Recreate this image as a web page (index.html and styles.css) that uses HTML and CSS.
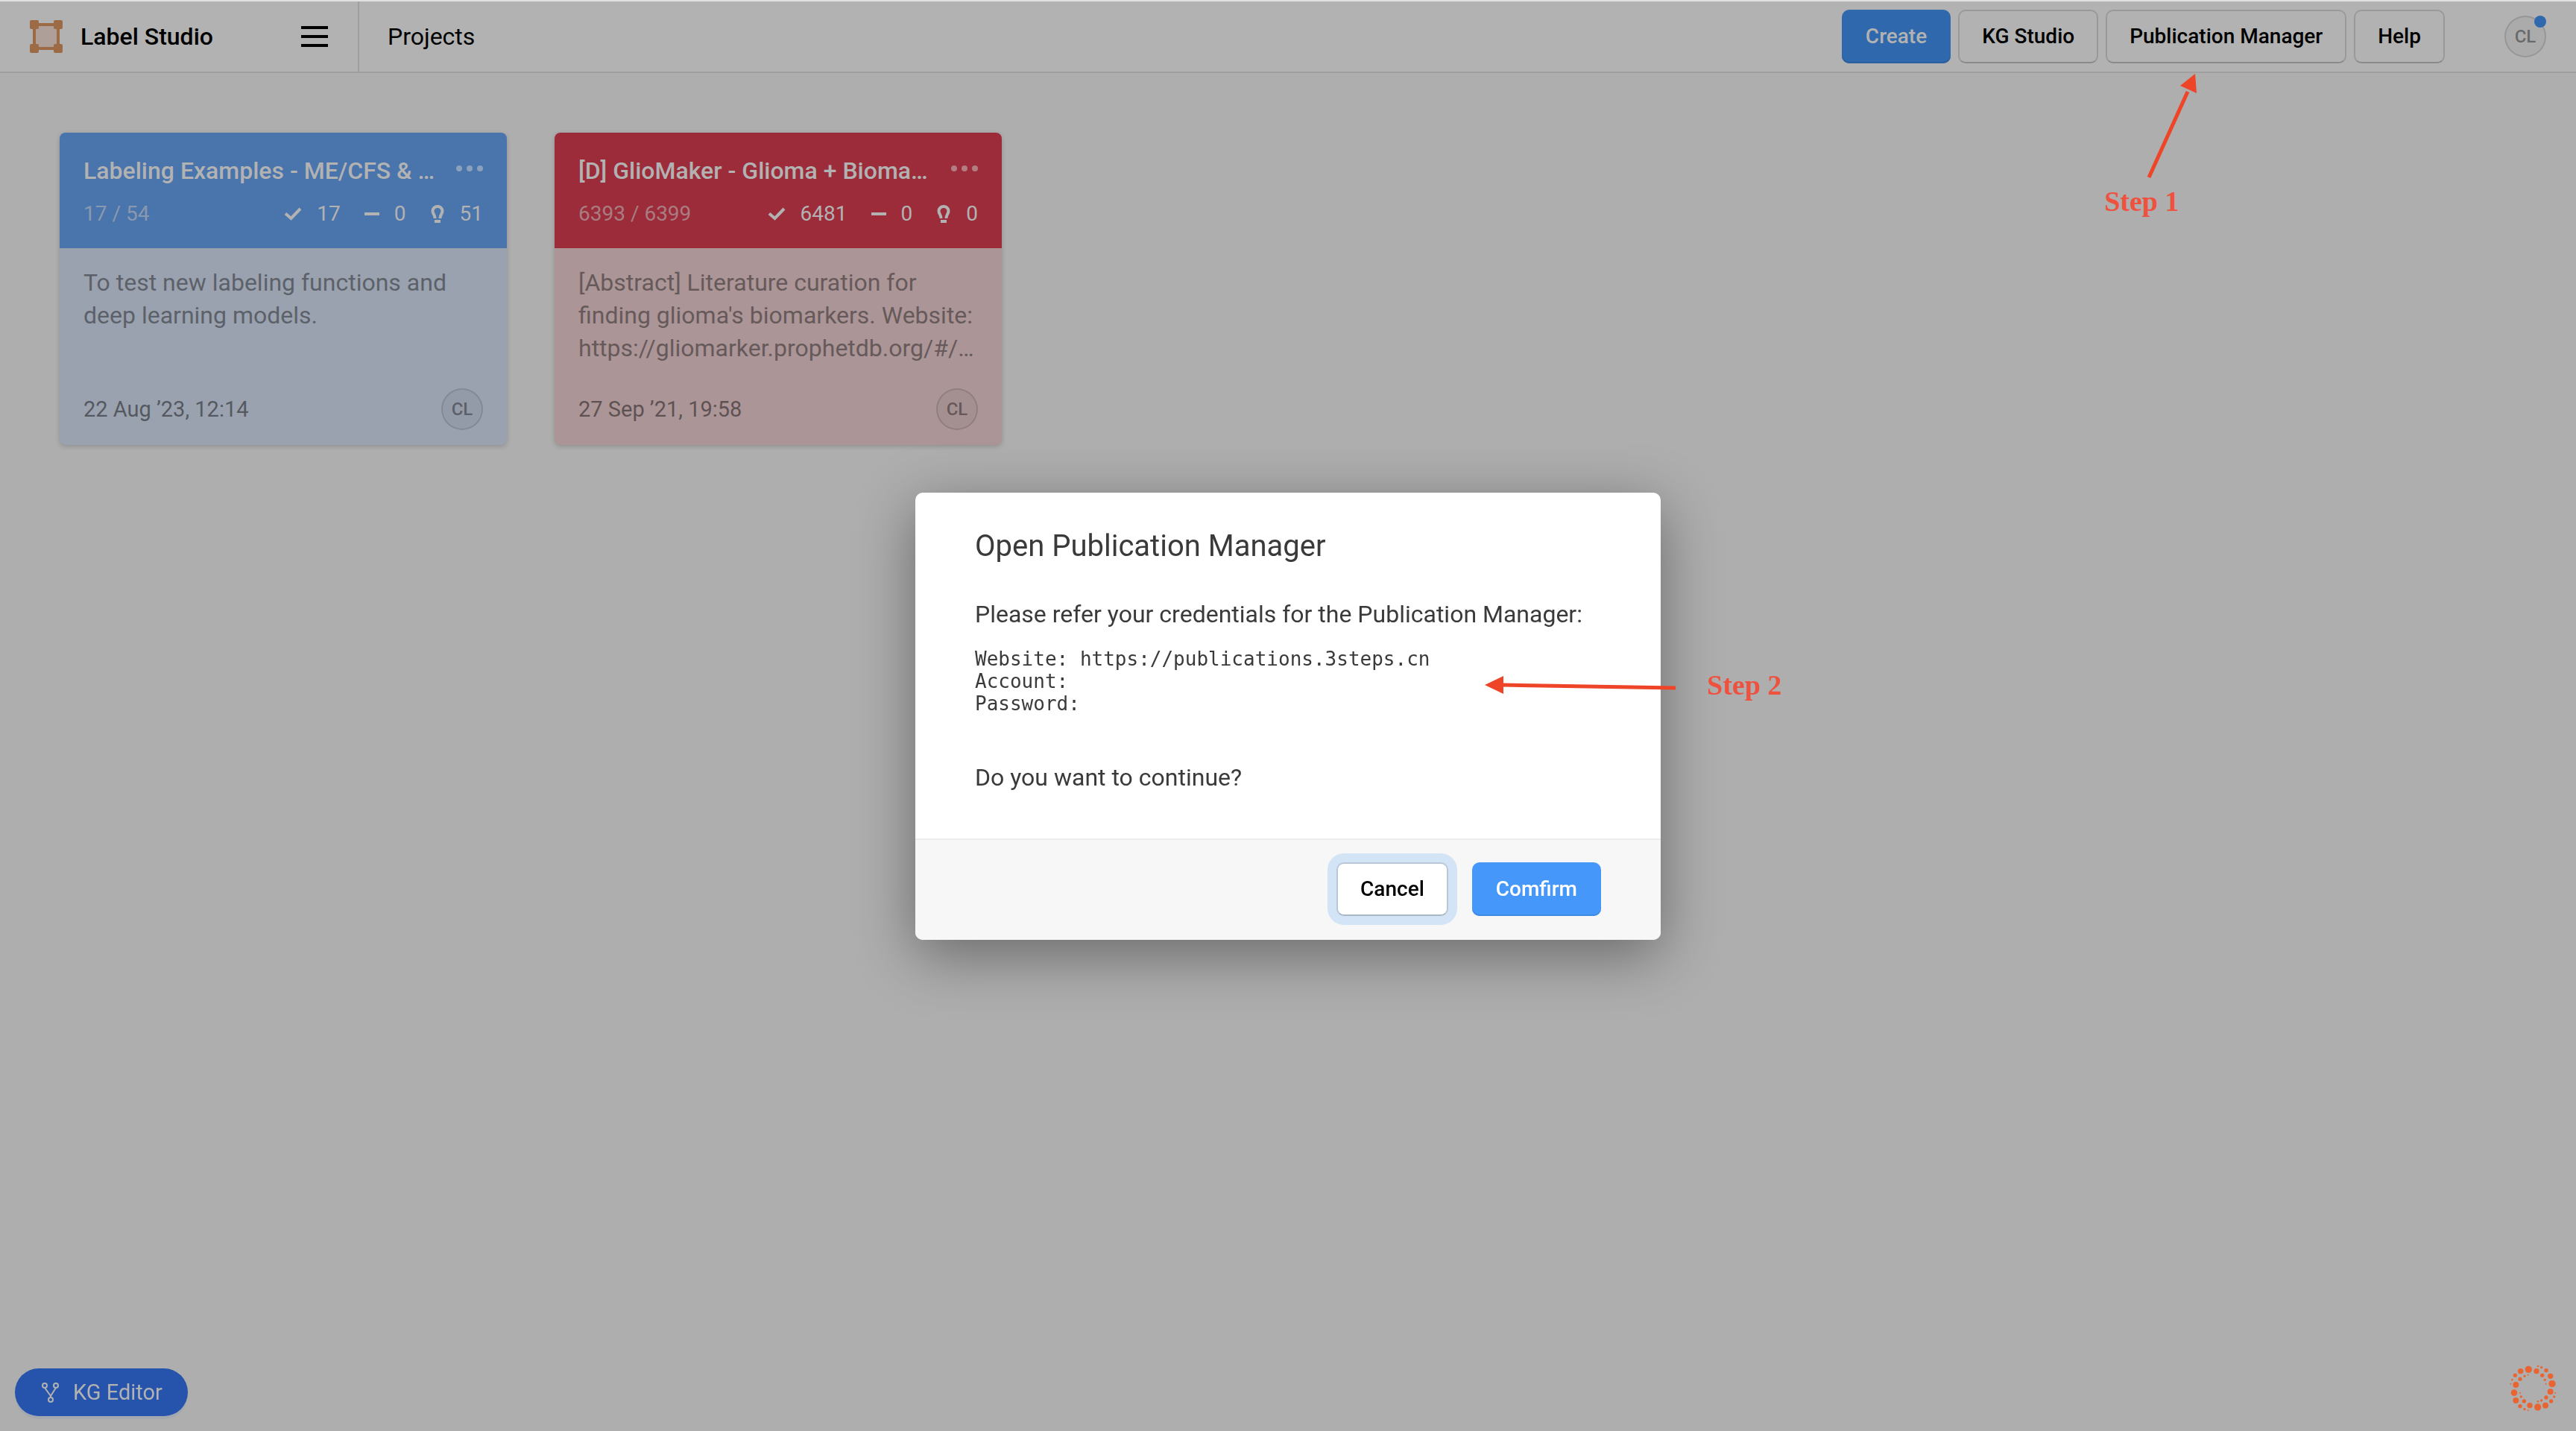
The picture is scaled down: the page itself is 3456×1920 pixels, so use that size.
FILE: index.html
```html
<!DOCTYPE html>
<html lang="en">
<head>
<meta charset="utf-8">
<title>Label Studio - Projects</title>
<link rel="stylesheet" href="styles.css">
</head>
<body>
<header class="topbar">
  <div class="brand">
    <a class="logo" href="#">
      <svg width="44" height="44" viewBox="0 0 44 44" aria-hidden="true">
        <rect x="6" y="6" width="32" height="32" fill="#aea099" stroke="#9c6a44" stroke-width="4"/>
        <g fill="#9c6a44"><rect width="12" height="12" rx="2"/><rect x="32" width="12" height="12" rx="2"/><rect y="32" width="12" height="12" rx="2"/><rect x="32" y="32" width="12" height="12" rx="2"/></g>
      </svg>
      <span>Label Studio</span>
    </a>
    <button class="menu-toggle" type="button" aria-label="Menu"><i></i><i></i><i></i></button>
  </div>
  <h1 class="crumb">Projects</h1>
  <div class="actions">
    <button class="btn btn-dim-primary" type="button">Create</button>
    <button class="btn btn-dim" type="button">KG Studio</button>
    <div class="anchor">
      <button class="btn btn-dim" type="button">Publication Manager</button>
      <div class="step step-one">
        <svg width="70" height="144" viewBox="0 0 70 144" aria-hidden="true"><path d="M6 141L58 26" stroke="#ee4427" stroke-width="5"/><path d="M68 2L48 18L70 28Z" fill="#ee4427"/></svg>
        <span>Step 1</span>
      </div>
    </div>
    <button class="btn btn-dim" type="button">Help</button>
  </div>
  <div class="avatar user">CL<i class="badge"></i></div>
</header>

<main class="projects">
  <article class="card card-blue">
    <div class="card-head">
      <div class="card-title"><h2>Labeling Examples - ME/CFS &amp; …</h2>
        <button class="more" type="button" aria-label="Project options"><i></i><i></i><i></i></button></div>
      <div class="card-stats">
        <span class="progress">17 / 54</span>
        <span class="stat"><svg width="24" height="20" viewBox="0 0 24 20"><path d="M2 9.500L9.500 16L22 3" fill="none" stroke="currentColor" stroke-width="4"/></svg>17</span>
        <span class="stat"><svg width="20" height="24" viewBox="0 0 20 24"><path d="M0 12H20" stroke="currentColor" stroke-width="4"/></svg>0</span>
        <span class="stat"><svg width="20" height="24" viewBox="0 0 20 24"><path d="M6.500 18C6.500 13 3.500 12 3.500 8A6.500 6 0 0 1 16.500 8C16.500 12 13.500 13 13.500 18" fill="none" stroke="currentColor" stroke-width="4"/><path d="M6 22H14" stroke="currentColor" stroke-width="4"/></svg>51</span>
      </div>
    </div>
    <p class="card-desc">To test new labeling functions and deep learning models.</p>
    <div class="card-foot"><time>22 Aug ’23, 12:14</time><div class="avatar">CL</div></div>
  </article>
  <article class="card card-red">
    <div class="card-head">
      <div class="card-title"><h2>[D] GlioMaker - Glioma + Bioma…</h2>
        <button class="more" type="button" aria-label="Project options"><i></i><i></i><i></i></button></div>
      <div class="card-stats">
        <span class="progress">6393 / 6399</span>
        <span class="stat"><svg width="24" height="20" viewBox="0 0 24 20"><path d="M2 9.500L9.500 16L22 3" fill="none" stroke="currentColor" stroke-width="4"/></svg>6481</span>
        <span class="stat"><svg width="20" height="24" viewBox="0 0 20 24"><path d="M0 12H20" stroke="currentColor" stroke-width="4"/></svg>0</span>
        <span class="stat"><svg width="20" height="24" viewBox="0 0 20 24"><path d="M6.500 18C6.500 13 3.500 12 3.500 8A6.500 6 0 0 1 16.500 8C16.500 12 13.500 13 13.500 18" fill="none" stroke="currentColor" stroke-width="4"/><path d="M6 22H14" stroke="currentColor" stroke-width="4"/></svg>0</span>
      </div>
    </div>
    <p class="card-desc">[Abstract] Literature curation for finding glioma's biomarkers. Website: https://gliomarker.prophetdb.org/#/…</p>
    <div class="card-foot"><time>27 Sep ’21, 19:58</time><div class="avatar">CL</div></div>
  </article>
</main>

<button class="editor" type="button">
  <svg width="24" height="28" viewBox="0 0 24 28" fill="none" stroke="currentColor" stroke-width="2" aria-hidden="true"><circle cx="4" cy="5" r="3"/><circle cx="19" cy="5" r="3"/><circle cx="12" cy="24" r="3"/><path d="M4 8L12 19L19 8M12 18V21"/></svg>
  KG Editor
</button>

<svg class="spinner" width="64" height="64" viewBox="0 0 192 192" fill="#ea6432" aria-hidden="true">
  <circle cx="79" cy="22" r="14"/><circle cx="47" cy="29" r="11"/><circle cx="111" cy="29" r="11"/><circle cx="117" cy="9" r="4"/><circle cx="131" cy="14" r="5"/><circle cx="150" cy="26" r="8"/><circle cx="134" cy="46" r="8"/><circle cx="167" cy="49" r="11"/><circle cx="145" cy="64" r="5"/><circle cx="149" cy="80" r="3"/><circle cx="174" cy="80" r="14"/><circle cx="167" cy="112" r="12"/><circle cx="187" cy="117" r="3"/><circle cx="182" cy="132" r="5"/><circle cx="150" cy="135" r="8"/><circle cx="170" cy="150" r="8"/><circle cx="131" cy="147" r="5"/><circle cx="117" cy="151" r="4"/><circle cx="147" cy="167" r="12"/><circle cx="116" cy="174" r="14"/><circle cx="84" cy="167" r="11"/><circle cx="77" cy="187" r="3"/><circle cx="63" cy="182" r="5"/><circle cx="61" cy="150" r="8"/><circle cx="45" cy="170" r="8"/><circle cx="28" cy="147" r="12"/><circle cx="49" cy="132" r="5"/><circle cx="45" cy="117" r="3"/><circle cx="21" cy="116" r="13"/><circle cx="28" cy="84" r="12"/><circle cx="7" cy="80" r="3"/><circle cx="13" cy="64" r="4"/><circle cx="25" cy="46" r="8"/><circle cx="45" cy="61" r="8"/><circle cx="63" cy="49" r="5"/><circle cx="77" cy="44" r="3"/>
</svg>

<div class="overlay">
  <section class="modal" role="dialog" aria-labelledby="modal-title">
    <div class="modal-body">
      <h2 id="modal-title">Open Publication Manager</h2>
      <p>Please refer your credentials for the Publication Manager:</p>
      <pre>Website: https://publications.3steps.cn
Account:
Password:</pre>
      <p>Do you want to continue?</p>
    </div>
    <footer class="modal-foot">
      <button class="btn btn-light" type="button">Cancel</button>
      <button class="btn btn-primary" type="button">Comfirm</button>
    </footer>
    <div class="step step-two">
      <svg width="258" height="28" viewBox="0 0 258 28" aria-hidden="true"><path d="M24 14L256 18" stroke="#ee4427" stroke-width="5"/><path d="M0 14L25 2V26Z" fill="#ee4427"/></svg>
      <span>Step 2</span>
    </div>
  </section>
</div>
</body>
</html>
```
FILE: styles.css
```css
* { box-sizing: border-box; }

body {
  margin: 0;
  min-height: 100vh;
  background: #aeaeae;
  color: #000;
  font: 400 32px/44px Roboto, "Liberation Sans", sans-serif;
}

h1, h2, p, pre { margin: 0; font-weight: 400; font-size: 32px; }
button { font: inherit; color: inherit; padding: 0; border: 0; background: none; }
svg { display: block; flex: none; }

/* Top bar */
.topbar {
  display: flex;
  align-items: center;
  height: 98px;
  padding-right: 40px;
  background: #b2b2b2;
  border-top: 2px solid #e0e0e0;
  border-bottom: 2px solid #9f9f9f;
}
.brand {
  display: flex;
  align-items: center;
  justify-content: space-between;
  align-self: stretch;
  width: 482px;
  padding: 0 40px;
  border-right: 2px solid #9f9f9f;
}
.logo { display: flex; align-items: center; gap: 24px; color: inherit; font-weight: 500; text-decoration: none; }
.menu-toggle { display: grid; gap: 8px; width: 36px; }
.menu-toggle i { height: 4px; background: #000; }
.crumb { padding-left: 38px; }
.actions { display: flex; gap: 10px; margin-left: auto; }
.anchor { position: relative; }

.btn {
  display: block;
  height: 72px;
  padding: 0 32px;
  border-radius: 10px;
  font-size: 28px;
  font-weight: 500;
  white-space: nowrap;
}
.btn-dim { padding: 0 30px; border: 2px solid #999; border-bottom-color: #8a8a8a; }
.btn-dim-primary { background: #2f68ac; color: #b2b2b2; box-shadow: inset 0 -2px #2b5f9d; }
.btn-light { padding: 0 30px; background: #fff; border: 2px solid #b9c8d8; border-bottom-color: #a9b7c5; box-shadow: 0 0 0 12px #d3e4f6; }
.btn-primary { background: #4598f9; color: #fff; box-shadow: inset 0 -2px #3f8be3; }

.avatar {
  display: grid;
  place-items: center;
  width: 56px;
  height: 56px;
  border: 2px solid rgb(0 0 0 / 12%);
  border-radius: 50%;
  background: rgb(0 0 0 / 4%);
  color: rgb(0 0 0 / 40%);
  font-size: 24px;
  font-weight: 500;
}
.user { position: relative; margin-left: 80px; }
.badge { position: absolute; top: -2px; right: -2px; width: 16px; height: 16px; border-radius: 50%; background: #2f68ac; }

/* Project cards */
.projects {
  display: grid;
  grid-template-columns: repeat(auto-fill, 600px);
  gap: 64px;
  padding: 80px;
}
.card {
  display: flex;
  flex-direction: column;
  height: 419px;
  border-radius: 8px;
  overflow: hidden;
  box-shadow: 0 2px 6px rgb(0 0 0 / 18%);
}
.card-head { height: 155px; padding: 29px 32px; color: #b2b2b2; }
.card-title { display: flex; justify-content: space-between; align-items: center; gap: 12px; }
.card-title h2 { white-space: nowrap; font-weight: 500; }
.more { display: flex; gap: 6px; padding-bottom: 6px; opacity: .5; }
.more i { width: 8px; height: 8px; border-radius: 50%; background: #ccc; }
.card-stats { display: flex; gap: 32px; padding-top: 14px; font-size: 28px; }
.progress { margin-right: auto; opacity: .6; }
.stat { display: flex; align-items: center; gap: 20px; }
.card-desc { padding: 24px 32px 0; opacity: .4; }
.card-foot { display: flex; justify-content: space-between; align-items: center; margin-top: auto; padding: 0 32px 20px; font-size: 29px; }
.card-foot time { opacity: .45; }
.card-blue { background: #9ba2af; }
.card-blue .card-head { background: #4974ac; }
.card-red { background: #ab9597; }
.card-red .card-head { background: #9c2c3a; }

/* Floating items */
.editor {
  position: fixed;
  left: 20px;
  bottom: 20px;
  display: flex;
  align-items: center;
  gap: 18px;
  height: 64px;
  padding: 0 34px 0 36px;
  border-radius: 32px;
  background: #2653ab;
  color: #b2b2b2;
  font-size: 29px;
  box-shadow: 0 4px 0 #a2a7b0;
}
.spinner { position: fixed; right: 26px; bottom: 26px; }

/* Dialog */
.overlay { position: fixed; inset: 0; display: grid; place-items: center; padding-top: 2px; }
.modal {
  position: relative;
  width: 1000px;
  border-radius: 10px;
  background: #fff;
  color: #3a3a3a;
  box-shadow: 0 20px 80px rgb(0 0 0 / 40%);
}
.modal-body { padding: 48px 80px 60px; }
.modal h2 { padding-bottom: 45px; font-size: 40px; line-height: 48px; }
.modal pre { padding: 23px 0 62px; font: 26px/30px "DejaVu Sans Mono", monospace; }
.modal-foot {
  display: flex;
  justify-content: flex-end;
  gap: 32px;
  padding: 30px 80px 32px;
  border-top: 2px solid #ececec;
  border-radius: 0 0 10px 10px;
  background: #f7f7f7;
}
.btn-light { color: #000; }

/* Walkthrough annotations */
.step { position: absolute; color: #ef513f; font: 700 38px/44px "Liberation Serif", serif; white-space: nowrap; }
.step-one { display: grid; gap: 7px; top: 84px; left: -2px; }
.step-one svg { margin-left: 54px; }
.step-two { display: flex; align-items: center; gap: 40px; top: 236px; left: 764px; }
```
